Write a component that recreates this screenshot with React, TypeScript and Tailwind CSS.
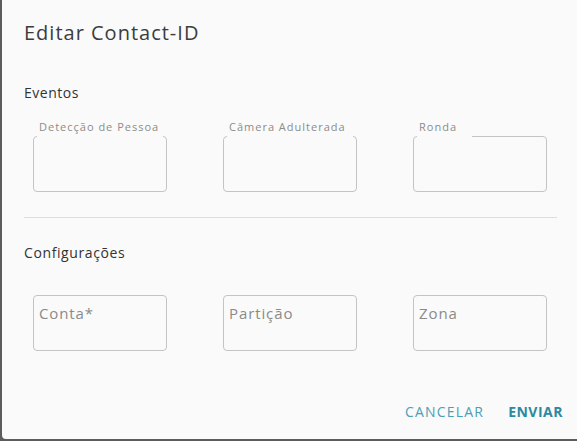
import React from "react";

const eventos = [
  { label: "Detecção de Pessoa", notch: "w-[126px]" },
  { label: "Câmera Adulterada", notch: "w-[126px]" },
  { label: "Ronda", notch: "w-[55px]" },
];
const configs = ["Conta*", "Partição", "Zona"];

function EventoField({ label, notch }: { label: string; notch: string }) {
  return (
    <div className="relative w-[134px] h-[56px] mt-[31px] border border-[#c4c4c4] rounded-[4px]">
      <div className={`absolute -top-[2px] left-[3px] h-[3px] bg-[#fafafa] ${notch}`} />
      <span className="absolute -top-[17px] left-[5px] text-[11px] leading-[14px] tracking-[1px] text-[#8c8c8c] whitespace-nowrap">
        {label}
      </span>
    </div>
  );
}

function ConfigField({ label }: { label: string }) {
  return (
    <div className="w-[134px] h-[56px] border border-[#c4c4c4] rounded-[4px] px-[5px] pt-[5px]">
      <span className="text-[15px] leading-[20px] tracking-[0.9px] text-[#8a8a8a]">{label}</span>
    </div>
  );
}

export default function App() {
  return (
    <div className="w-[577px] h-[441px] bg-[#5c5c5c] font-['Open_Sans',sans-serif]">
      <div className="ml-[2px] h-[439px] bg-[#fafafa] rounded-bl-[4px] flex flex-col">
        {/* Título */}
        <h1 className="pl-[22px] pt-[20px] text-[20px] leading-[26px] text-[#3c3c3c] tracking-[1px]">
          Editar Contact-ID
        </h1>

        {/* Eventos */}
        <div className="pl-[22px] pr-[20px] mt-[37px]">
          <p className="text-[14px] leading-[20px] text-[#333] tracking-[0.5px]">Eventos</p>
          <div className="flex gap-[56px] pl-[9px] mt-[2px]">
            {eventos.map((e) => (
              <EventoField key={e.label} label={e.label} notch={e.notch} />
            ))}
          </div>
          <div className="mt-[25px] h-px bg-[#dddddd]" />
        </div>

        {/* Configurações */}
        <div className="pl-[22px] mt-[25px]">
          <p className="text-[14px] leading-[20px] text-[#333] tracking-[0.6px]">Configurações</p>
          <div className="flex gap-[56px] pl-[9px] mt-[32px]">
            {configs.map((c) => (
              <ConfigField key={c} label={c} />
            ))}
          </div>
        </div>

        {/* Ações */}
        <div className="mt-auto mb-[17px] flex justify-end items-center gap-[24px] pr-[14px]">
          <button className="text-[14px] leading-[20px] text-[#4aa0b5] tracking-[1.2px]">CANCELAR</button>
          <button className="text-[14px] leading-[20px] font-bold text-[#2b8aa2] tracking-[0.5px]">ENVIAR</button>
        </div>
      </div>
    </div>
  );
}
